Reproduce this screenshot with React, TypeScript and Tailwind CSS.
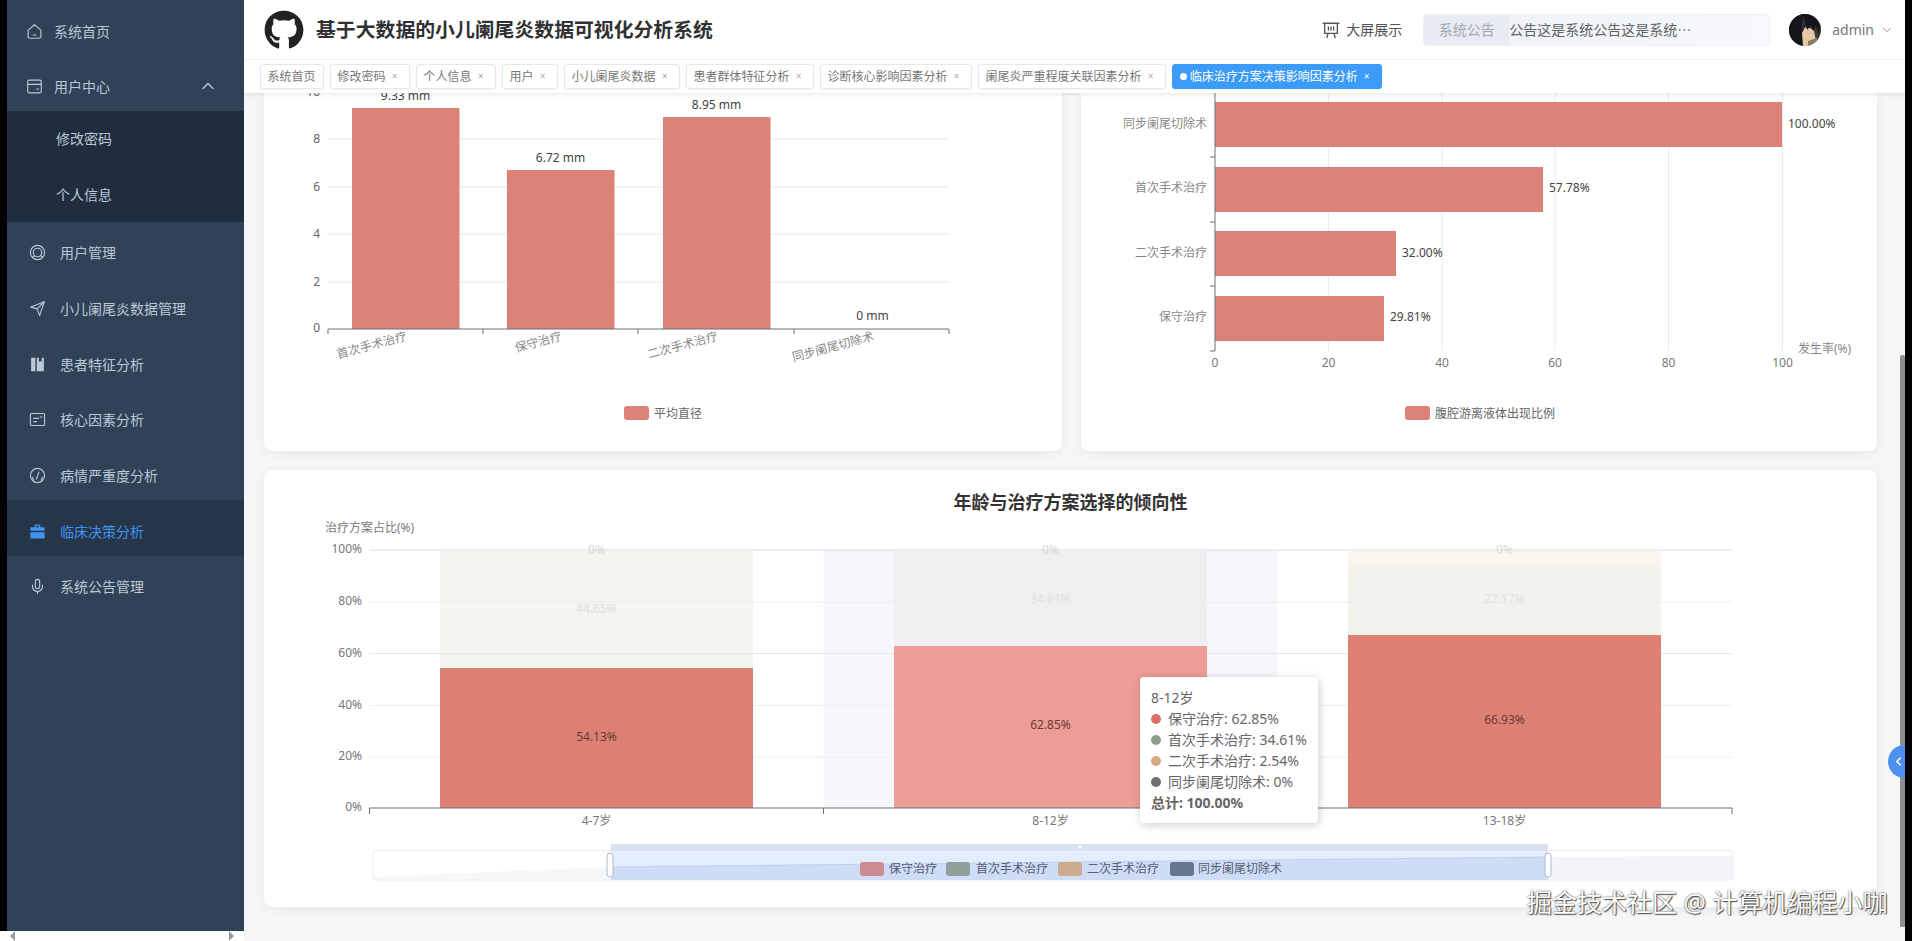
import React from "react";
import { ChevronDown, ChevronLeft, ChevronUp, Mic } from "lucide-react";
import { FaGithub } from "react-icons/fa";

const font = '"Noto Sans", "Noto Sans CJK SC", sans-serif';

const IconBox = ({ children }: { children: React.ReactNode }) => (
  <svg viewBox="0 0 24 24" className="w-[17px] h-[17px] shrink-0" fill="none" stroke="currentColor" strokeWidth="1.6" strokeLinejoin="round" strokeLinecap="round">
    {children}
  </svg>
);

const HomeIcon = () => (
  <IconBox>
    <path d="M3 10 12 2.5 21 10v9a2.5 2.5 0 0 1-2.5 2.5h-13A2.5 2.5 0 0 1 3 19z" />
    <path d="M10 17h4" />
  </IconBox>
);
const WalletIcon = () => (
  <IconBox>
    <rect x="2.5" y="3" width="19" height="18" rx="2" />
    <path d="M2.5 9h19M15 15.5h3" />
  </IconBox>
);
const HelpIcon = () => (
  <IconBox>
    <circle cx="12" cy="12" r="10" />
    <circle cx="12" cy="12" r="6" />
    <path d="M7.5 16.5 5 19M16.5 16.5 19 19" />
  </IconBox>
);
const SendIcon = () => (
  <IconBox>
    <path d="M2.5 10 21.5 2.5 15 22 11.5 12.5z" />
    <path d="M11.5 12.5 21.5 2.5" />
  </IconBox>
);
const CollectionIcon = () => (
  <svg viewBox="0 0 24 24" className="w-[17px] h-[17px] shrink-0" fill="currentColor">
    <path d="M3 2.5h6v19H3zM11 2.5h3v6l1.8-1.8L18 8.5v-6h3v19H11z" />
  </svg>
);
const PostcardIcon = () => (
  <IconBox>
    <rect x="2" y="3.5" width="20" height="17" rx="1.5" />
    <path d="M6.5 10.5h7M6.5 15h4M16 8.5h2.5" />
  </IconBox>
);
const OdometerIcon = () => (
  <IconBox>
    <circle cx="12" cy="12" r="10" />
    <path d="M10.5 17 14 7M7 18.5a8 8 0 0 1-2-4M17 18.5a8 8 0 0 0 2-4" />
  </IconBox>
);
const SuitcaseIcon = () => (
  <svg viewBox="0 0 24 24" className="w-[17px] h-[17px] shrink-0" fill="currentColor">
    <path d="M8 2h8v4h5a1 1 0 0 1 1 1v4H2V7a1 1 0 0 1 1-1h5zm2 2v2h4V4zM2 13h20v8a1 1 0 0 1-1 1H3a1 1 0 0 1-1-1z" />
  </svg>
);
const MicIcon = () => <Mic size={17} strokeWidth={1.6} className="shrink-0" />;

const BoardIcon = () => (
  <svg viewBox="0 0 24 24" className="w-[18px] h-[18px]" fill="none" stroke="#555" strokeWidth="1.8" strokeLinecap="round" strokeLinejoin="round">
    <path d="M1.5 3h21M3.5 3v13.5h17V3M8 17l-1.5 5M16 17l1.5 5M8.5 8v4M12 8v4M15.5 8v4" />
  </svg>
);

const Avatar = () => (
  <svg viewBox="0 0 32 32" className="w-8 h-8 rounded-full">
    <rect width="32" height="32" fill="#3a3a38" />
    <path d="M10 16c4-4 12-3 15 1l3 15H11z" fill="#e6c8a8" />
    <path d="M19 27l9-3 3 8H19z" fill="#8c7a5c" />
    <path d="M0 0h32v12l-3 8-2-8-3 5-2-6-4 5-1-5-4 8 1 13H0z" fill="#15161a" />
    <path d="M14 2l3 8-5 8z" fill="#2b2e38" />
  </svg>
);

const topMenu = [
  { name: "系统首页", icon: <HomeIcon />, h: "h-[56px] mt-[3px]" },
  { name: "用户中心", icon: <WalletIcon />, h: "h-[52px] pt-[2px]", open: true },
];
const subMenu = ["修改密码", "个人信息"];
const menu = [
  { name: "用户管理", icon: <HelpIcon /> },
  { name: "小儿阑尾炎数据管理", icon: <SendIcon /> },
  { name: "患者特征分析", icon: <CollectionIcon /> },
  { name: "核心因素分析", icon: <PostcardIcon /> },
  { name: "病情严重度分析", icon: <OdometerIcon /> },
  { name: "临床决策分析", icon: <SuitcaseIcon />, active: true },
  { name: "系统公告管理", icon: <MicIcon /> },
];

const tags = [
  { name: "系统首页", fixed: true },
  { name: "修改密码" },
  { name: "个人信息" },
  { name: "用户" },
  { name: "小儿阑尾炎数据" },
  { name: "患者群体特征分析" },
  { name: "诊断核心影响因素分析" },
  { name: "阑尾炎严重程度关联因素分析" },
  { name: "临床治疗方案决策影响因素分析", active: true },
];

function Sidebar() {
  return (
    <div className="w-[244px] shrink-0 flex flex-col">
      <div className="h-[931px] flex">
        <div className="w-[7px] bg-black" />
        <div className="w-[237px] bg-[#304258] text-[14px] text-[#bcc8d6]">
          {topMenu.map((el, idx) => (
            <div key={idx} className={`${el.h} flex items-center gap-[11px] pl-[19px]`}>
              {el.icon}
              <span>{el.name}</span>
              {el.open && <ChevronUp size={20} strokeWidth={1.6} className="ml-[77px]" />}
            </div>
          ))}
          <div className="bg-[#1f2d3e]">
            {subMenu.map((el, idx) => (
              <div key={idx} className="h-[55.5px] flex items-center pl-[49px]">
                {el}
              </div>
            ))}
          </div>
          {menu.map((el, idx) => (
            <div
              key={idx}
              className={`${el.active ? "bg-[#263547] text-[#3f94f5]" : ""} h-[55.67px] pt-[6px] flex items-center gap-[14px] pl-[22px]`}
            >
              {el.icon}
              <span>{el.name}</span>
            </div>
          ))}
        </div>
      </div>
      <div className="h-[10px] bg-white flex items-center justify-between px-[10px]">
        <span className="w-0 h-0 border-y-[5px] border-y-transparent border-r-[5px] border-r-[#999]" />
        <span className="w-0 h-0 border-y-[5px] border-y-transparent border-l-[5px] border-l-[#999]" />
      </div>
    </div>
  );
}

function Header() {
  return (
    <div className="h-[60px] shrink-0 bg-white border-b border-[#f0f1f3] flex items-center pl-[20px]">
      <FaGithub className="text-[40px] text-[#222]" />
      <h1 className="ml-[12px] text-[19.85px] font-bold text-[#303133] leading-none">基于大数据的小儿阑尾炎数据可视化分析系统</h1>
      <div className="ml-auto flex items-center text-[14px] text-[#555]">
        <BoardIcon />
        <span className="ml-[6px]">大屏展示</span>
        <div className="ml-[21px] w-[347px] h-[32px] rounded-[4px] bg-gradient-to-r from-[#eef1f6] to-[#f6f8fb] border border-[#eef0f4] flex items-center overflow-hidden">
          <span className="w-[85px] h-full bg-[#e8ecf2] text-[#a0a8b2] flex items-center justify-center shrink-0">系统公告</span>
          <span className="text-[#606266] whitespace-nowrap">
            公告这是系统公告这是系统<span className="font-['Noto_Sans_CJK_SC']">⋯</span>
          </span>
        </div>
        <div className="ml-[19px]">
          <Avatar />
        </div>
        <span className="ml-[11px] text-[#777]">admin</span>
        <ChevronDown size={14} strokeWidth={1.5} className="ml-[6px] mr-[11px] text-[#888]" />
      </div>
    </div>
  );
}

function Tags() {
  return (
    <div className="h-[33px] shrink-0 bg-white relative z-10 shadow-[0_2px_4px_rgba(0,0,0,0.08)] flex items-start pt-[4px] pl-[15.5px] gap-[6px] text-[12px]">
      {tags.map((el, idx) => (
        <div
          key={idx}
          className={`${
            el.active ? "bg-[#3d9bf8] text-white border-[#3d9bf8]" : "bg-white text-[#777] border-[#e4e7ed]"
          } h-[25px] px-[7px] border rounded-[3px] flex items-center shadow-[0_1px_2px_rgba(0,0,0,0.05)] whitespace-nowrap`}
        >
          {el.active && <span className="w-[7px] h-[7px] rounded-full bg-white mr-[3px]" />}
          {el.name}
          {!el.fixed && (
            <span className={`${el.active ? "text-white" : "text-[#aaa]"} w-[14px] ml-[2px] text-center text-[10px]`}>×</span>
          )}
        </div>
      ))}
    </div>
  );
}

const gridY = [
  { l: "10", y: 91.5 },
  { l: "8", y: 139 },
  { l: "6", y: 187 },
  { l: "4", y: 234 },
  { l: "2", y: 282 },
  { l: "0", y: 328 },
];
const diameters = [
  { name: "首次手术治疗", label: "9.33 mm", x: 352, top: 108, cx: 405.5 },
  { name: "保守治疗", label: "6.72 mm", x: 507, top: 170, cx: 560.5 },
  { name: "二次手术治疗", label: "8.95 mm", x: 663, top: 117, cx: 716.5 },
  { name: "同步阑尾切除术", label: "0 mm", x: 0, top: 328, cx: 872.5 },
];

function DiameterChart() {
  return (
    <svg viewBox="264 93 798 358" className="w-full h-full" fontSize="12" fill="#666">
      {gridY.slice(0, 5).map((el) => (
        <line key={el.l} x1="328" x2="949" y1={el.y} y2={el.y} stroke="#e6e7ea" />
      ))}
      {gridY.map((el) => (
        <text key={el.l} x="320" y={el.y + 4} textAnchor="end">{el.l}</text>
      ))}
      {diameters.map((el) => (
        <g key={el.name}>
          {el.x > 0 && <rect x={el.x} y={el.top} width="107.5" height={329 - el.top} fill="#dc8276" />}
          <text x={el.cx} y={el.top - 8} textAnchor="middle" fill="#444">{el.label}</text>
          <text x={el.cx + 1} y="340" textAnchor="end" fill="#888" transform={`rotate(-15 ${el.cx + 1} 336)`}>{el.name}</text>
        </g>
      ))}
      <path d="M328 334v-5h621v5M483 329v5M638 329v5M794 329v5" fill="none" stroke="#6e7079" />
      <rect x="624" y="406" width="25" height="14" rx="3" fill="#dc8276" />
      <text x="654" y="417.5">平均直径</text>
    </svg>
  );
}

const fluid = [
  { name: "同步阑尾切除术", label: "100.00%", top: 102, right: 1782, ly: 128 },
  { name: "首次手术治疗", label: "57.78%", top: 167, right: 1543, ly: 192 },
  { name: "二次手术治疗", label: "32.00%", top: 231, right: 1396, ly: 257 },
  { name: "保守治疗", label: "29.81%", top: 296, right: 1384, ly: 321 },
];
const fluidX = [
  { l: "0", x: 1215 },
  { l: "20", x: 1328.5 },
  { l: "40", x: 1442 },
  { l: "60", x: 1555 },
  { l: "80", x: 1668.5 },
  { l: "100", x: 1782.5 },
];

function FluidChart() {
  return (
    <svg viewBox="1081 93 796 358" className="w-full h-full" fontSize="12" fill="#666">
      {fluidX.slice(1).map((el) => (
        <line key={el.l} x1={el.x} x2={el.x} y1="93" y2="351" stroke="#e9eaec" />
      ))}
      {fluidX.map((el) => (
        <text key={el.l} x={el.x} y="367" textAnchor="middle" fill="#777">{el.l}</text>
      ))}
      {fluid.map((el) => (
        <g key={el.name}>
          <rect x="1215" y={el.top} width={el.right - 1215} height="45" fill="#dc8276" />
          <text x="1207" y={el.ly} textAnchor="end" fill="#888">{el.name}</text>
          <text x={el.right + 6} y={el.ly} fill="#444">{el.label}</text>
        </g>
      ))}
      <path d="M1215 93v258h-5M1210 157h5M1210 222h5M1210 286h5" fill="none" stroke="#6e7079" />
      <text x="1798" y="353" fill="#888">发生率(%)</text>
      <rect x="1405" y="406" width="25" height="14" rx="3" fill="#dc8276" />
      <text x="1435" y="417.5">腹腔游离液体出现比例</text>
    </svg>
  );
}

const ageGrid = [
  { l: "100%", y: 549, c: "#dcdde0" },
  { l: "80%", y: 601, c: "#eceded" },
  { l: "60%", y: 652.5, c: "#e6e7ea" },
  { l: "40%", y: 704.5, c: "#eceded" },
  { l: "20%", y: 756, c: "#eeeeef" },
];
const ageBars = [
  { age: "4-7岁", x: 440, top: 667, pct: "54.13%", faint: "44.65%", up: "#f4f4f0", fill: "#dc8074", cy: 740, fy: 612 },
  { age: "8-12岁", x: 894, top: 645, pct: "62.85%", faint: "34.61%", up: "#eeeff1", fill: "#ec9d96", cy: 728, fy: 602 },
  { age: "13-18岁", x: 1348, top: 634, pct: "66.93%", faint: "27.17%", up: "#f3f3ee", fill: "#de8074", cy: 723, fy: 602 },
];
const legend = [
  { name: "保守治疗", x: 860, c: "#cd8a90", tx: 889 },
  { name: "首次手术治疗", x: 946, c: "#8f9f9c", tx: 976 },
  { name: "二次手术治疗", x: 1058, c: "#cda98e", tx: 1087 },
  { name: "同步阑尾切除术", x: 1170, c: "#68758f", tx: 1198 },
];

function AgeChart() {
  return (
    <svg viewBox="264 469 1613 437" className="w-full h-full" fontSize="12" fill="#666">
      <text x="1070.5" y="508" textAnchor="middle" fontSize="18" fontWeight="700" fill="#333">年龄与治疗方案选择的倾向性</text>
      <text x="325" y="531" fill="#777">治疗方案占比(%)</text>
      <rect x="823.5" y="549" width="454" height="258" fill="#f5f7fb" />
      {ageBars.map((el) => (
        <rect key={el.age} x={el.x} y="550" width="313" height={el.top - 550} fill={el.up} />
      ))}
      <rect x="1348" y="550" width="313" height="15" fill="#faf6ef" />
      {ageGrid.map((el) => (
        <g key={el.l}>
          <line x1="369.5" x2="1732" y1={el.y} y2={el.y} stroke={el.c} />
          <text x="362" y={el.y + 3} textAnchor="end" fill="#777">{el.l}</text>
        </g>
      ))}
      <text x="362" y="810" textAnchor="end" fill="#777">0%</text>
      {ageBars.map((el) => (
        <g key={el.age}>
          <rect x={el.x} y={el.top} width="313" height={807 - el.top} fill={el.fill} />
          <text x={el.x + 156.5} y={el.cy} textAnchor="middle" fill="#6b3a34">{el.pct}</text>
          <text x={el.x + 156.5} y={el.fy} textAnchor="middle" fill="#e2e2de">{el.faint}</text>
          <text x={el.x + 156.5} y="553" textAnchor="middle" fill="#d8d8d6">0%</text>
          <text x={el.x + 156.5} y="824" textAnchor="middle" fill="#777">{el.age}</text>
        </g>
      ))}
      <path d="M369.5 813v-6h1362.5v6M823.5 807v6M1277.5 807v6" fill="none" stroke="#6e7079" />

      <rect x="373" y="849.5" width="1360" height="29.5" rx="3" fill="#fff" stroke="#e8ebf0" />
      <path d="M374 876 610 866v12H374z" fill="#f6f7f9" />
      <path d="M1548 856 1732 855v23h-184z" fill="#f2f4f9" />
      <rect x="611" y="843" width="937" height="7" fill="#dbe1ef" />
      <rect x="611" y="850" width="937" height="29" fill="#e2edfd" />
      <path d="M611 866 1548 856v23H611z" fill="#cfdcf7" stroke="none" />
      <path d="M611 866 1548 856" fill="none" stroke="#c0cfec" />
      <circle cx="1080" cy="846" r="1.5" fill="#fff" />
      <rect x="607" y="852" width="6" height="24" rx="3" fill="#fff" stroke="#acb8d1" />
      <rect x="1545" y="852" width="6" height="24" rx="3" fill="#fff" stroke="#acb8d1" />
      {legend.map((el) => (
        <g key={el.name}>
          <rect x={el.x} y="861" width="24" height="14" rx="3" fill={el.c} />
          <text x={el.tx} y="872" fill="#555d70">{el.name}</text>
        </g>
      ))}
    </svg>
  );
}

const tipRows = [
  { c: "#dd6f68", t: "保守治疗: 62.85%" },
  { c: "#919e8b", t: "首次手术治疗: 34.61%" },
  { c: "#d7ab82", t: "二次手术治疗: 2.54%" },
  { c: "#6e7074", t: "同步阑尾切除术: 0%" },
];

function Tooltip() {
  return (
    <div className="absolute left-[876px] top-[207px] w-[178px] h-[146px] bg-white rounded-[4px] shadow-[1px_2px_10px_rgba(0,0,0,0.2)] pl-[11px] pt-[10px] text-[14px] leading-[21px] text-[#666] whitespace-nowrap">
      <div>8-12岁</div>
      {tipRows.map((el) => (
        <div key={el.t} className="flex items-center">
          <span className="w-[10px] h-[10px] rounded-full mr-[7px] shrink-0" style={{ backgroundColor: el.c }} />
          {el.t}
        </div>
      ))}
      <div className="font-bold">总计: 100.00%</div>
    </div>
  );
}

export default function App() {
  return (
    <div className="relative flex w-[1912px] h-[941px] overflow-hidden bg-white" style={{ fontFamily: font }}>
      <Sidebar />
      <div className="w-[1661px] shrink-0 flex flex-col">
        <Header />
        <Tags />
        <div className="relative flex-1 bg-[#f5f6f8] pl-[20px] pr-[28px] overflow-hidden">
          <div className="flex gap-[19px] h-[358px]">
            <div className="w-[798px] bg-white rounded-b-lg shadow-[0_2px_12px_rgba(0,0,0,0.06)]">
              <DiameterChart />
            </div>
            <div className="w-[796px] bg-white rounded-b-lg shadow-[0_2px_12px_rgba(0,0,0,0.06)]">
              <FluidChart />
            </div>
          </div>
          <div className="relative mt-[19px] h-[437px] bg-white rounded-lg shadow-[0_2px_12px_rgba(0,0,0,0.06)]">
            <AgeChart />
            <Tooltip />
          </div>
          <div className="absolute right-0 top-[262px] bottom-[14px] w-[5px] bg-[#8f8f8f] rounded-t-[2px]" />
          <div className="absolute right-0 top-[652px] w-[17px] h-[33px] bg-[#4f8ff0] rounded-l-full flex items-center justify-end text-white">
            <ChevronLeft size={13} strokeWidth={3} />
          </div>
        </div>
      </div>
      <div className="w-[7px] shrink-0 bg-black" />
      <div className="absolute left-[1527px] top-[887px] text-[25px] leading-[30px] text-white whitespace-nowrap [text-shadow:0_0_2px_rgba(0,0,0,0.8),1px_1px_1px_rgba(0,0,0,0.6)]">
        掘金技术社区 @ 计算机编程小咖
      </div>
    </div>
  );
}
